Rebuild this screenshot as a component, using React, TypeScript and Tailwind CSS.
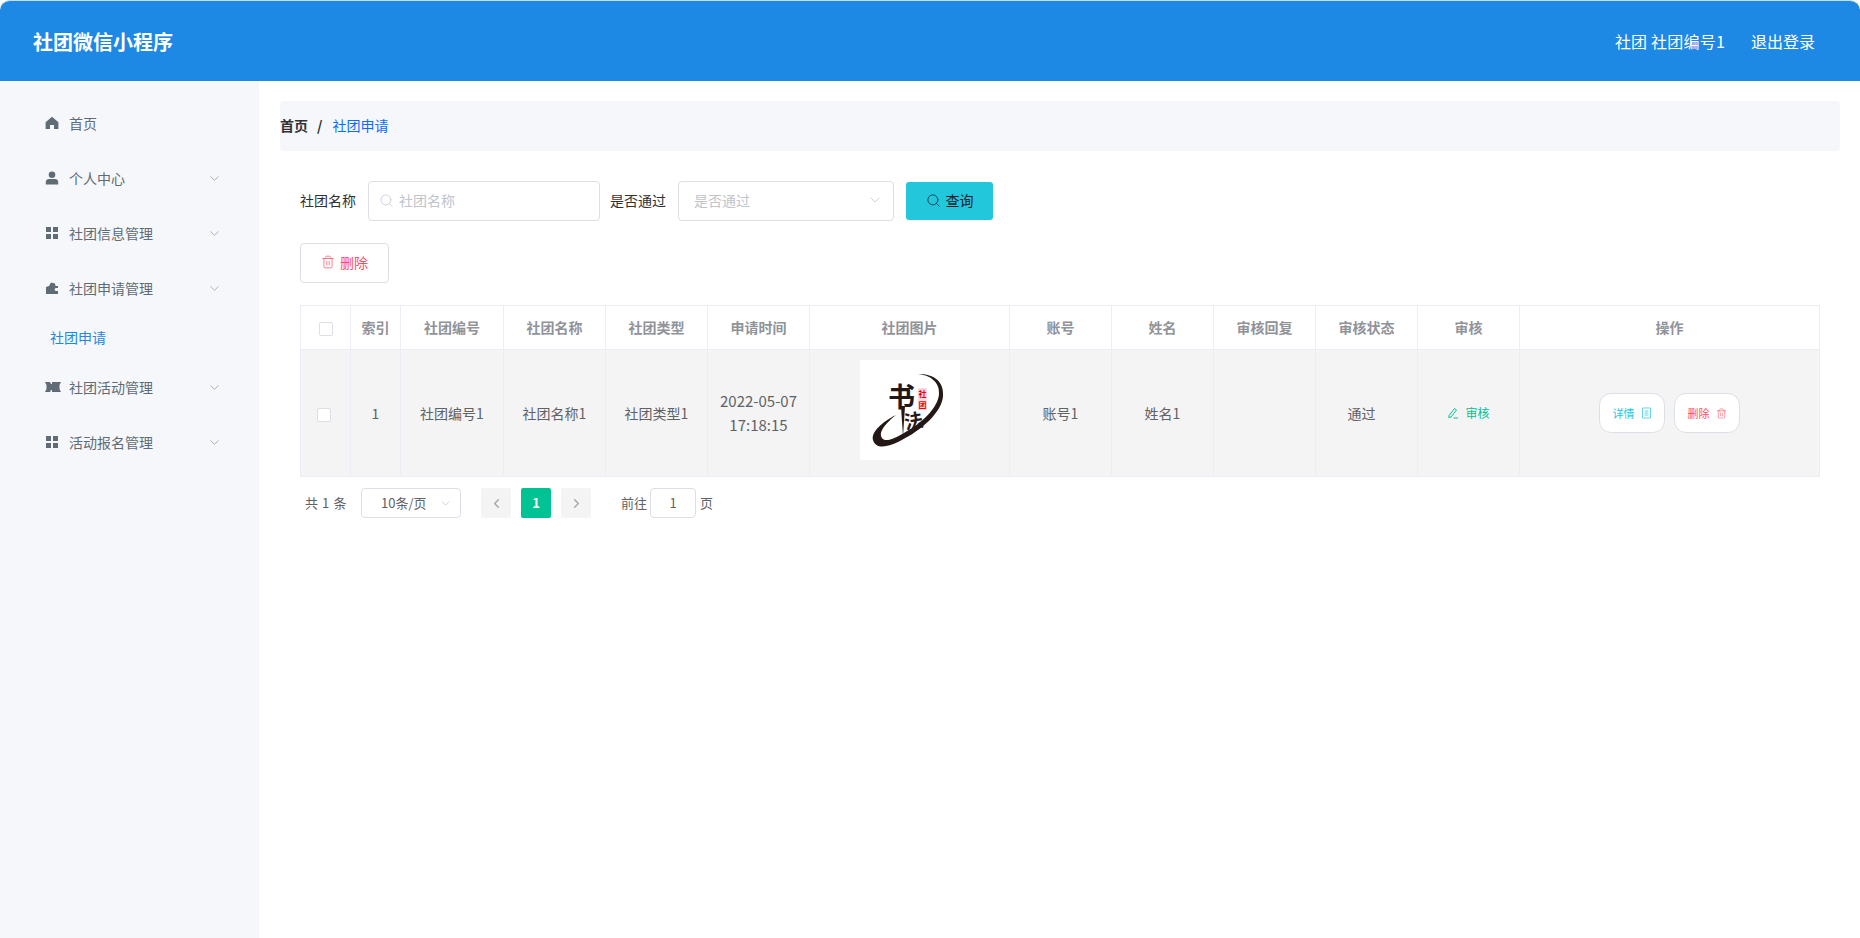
import { ChevronDown, ChevronLeft, ChevronRight, Search, Trash2 } from "lucide-react";
import type { ReactNode } from "react";

const cjk = "font-['Microsoft_YaHei','Noto_Sans_CJK_SC','Noto_Sans',sans-serif]";

function HomeIcon() {
  return (
    <svg width="14" height="14" viewBox="0 0 14 14" fill="#5f6b75">
      <path d="M7 .8 13.4 6.200V13H9V9H5v4H.6V6.200Z" />
    </svg>
  );
}

function UserIcon() {
  return (
    <svg width="14" height="14" viewBox="0 0 14 14" fill="#5f6b75">
      <circle cx="7" cy="3.800" r="3.300" />
      <path d="M.8 13.500V11c0-1.900 1.500-3 3-3h6.400c1.500 0 3 1.100 3 3v2.500Z" />
    </svg>
  );
}

function GridIcon() {
  return (
    <svg width="14" height="14" viewBox="0 0 14 14" fill="#5f6b75">
      <rect x="1" y="1" width="5" height="5" />
      <rect x="8" y="1" width="5" height="5" />
      <rect x="1" y="8" width="5" height="5" />
      <rect x="8" y="8" width="5" height="5" />
    </svg>
  );
}

function CaseIcon() {
  return (
    <svg width="14" height="14" viewBox="0 0 14 14" fill="#5f6b75">
      <path d="M1 6 4 5 6 1.500 10 2.500 10.500 5 13 5V7H10.500L9.500 8.500 10.500 10H13V13H1Z" />
    </svg>
  );
}

function TicketIcon() {
  return (
    <svg width="16" height="14" viewBox="0 0 16 14" fill="#5f6b75">
      <path d="M0 2h5l1 2h1V2h4l1 0h4l-1.500 3v4L16 12h-4l-1 0H7v-2H6l-1 2H0l1.500-3V5Z" />
    </svg>
  );
}

function MenuItem({ icon, label, arrow = true }: { icon: ReactNode; label: string; arrow?: boolean }) {
  return (
    <div className="flex h-[55px] items-center pl-[45px] pr-[37px] text-sm text-[#5f6b75]">
      <span className="flex w-6 shrink-0 items-center">{icon}</span>
      <span className="flex-1">{label}</span>
      {arrow && <ChevronDown size={15} strokeWidth={1.1} className="mt-[2px] text-[#8a939c]" />}
    </div>
  );
}

function Sidebar() {
  return (
    <aside className="w-[259px] shrink-0 bg-[#f5f7fb] pt-[14px]">
      <MenuItem icon={<HomeIcon />} label="首页" arrow={false} />
      <MenuItem icon={<UserIcon />} label="个人中心" />
      <MenuItem icon={<GridIcon />} label="社团信息管理" />
      <MenuItem icon={<CaseIcon />} label="社团申请管理" />
      <div className="flex h-[44px] items-center pl-[50px] text-sm text-[#1e88e5]">社团申请</div>
      <MenuItem icon={<TicketIcon />} label="社团活动管理" />
      <MenuItem icon={<GridIcon />} label="活动报名管理" />
    </aside>
  );
}

function Checkbox({ className = "" }: { className?: string }) {
  return <span className={`inline-block h-[14px] w-[14px] rounded-[2px] border border-[#dcdfe6] bg-white align-middle ${className}`} />;
}

// the society's round logo, the characters stay real text
function Logo() {
  const family = "'Noto Sans CJK SC',sans-serif";
  return (
    <div className="mx-auto mb-[7px] h-[100px] w-[100px] bg-white">
      <svg width="100" height="100" viewBox="0 0 100 100">
        <path
          d="M58 14C75 14 84 22 83 36C82 52 62 70 40 81C28 87 16 90 13 80C11 72 22 62 36 55C26 63 18 72 22 78C25 83 36 78 44 73C62 63 78 48 79 34C80 22 70 15 58 14Z"
          fill="#231815"
        />
        <text x="28" y="47" fontSize="27" fontWeight="700" fill="#231815" fontFamily={family}>
          书
        </text>
        <path d="M41 46 43 77 45 46Z" fill="#231815" />
        <text x="44" y="68" fontSize="19" fontWeight="700" fill="#231815" fontFamily={family} transform="rotate(-10 53 60)">
          法
        </text>
        <rect x="58" y="28" width="9" height="22" fill="#fbdcdc" />
        <text x="58.500" y="37" fontSize="8" fontWeight="700" fill="#e60012" fontFamily={family}>
          社
        </text>
        <text x="58.500" y="48" fontSize="8" fontWeight="700" fill="#e60012" fontFamily={family}>
          团
        </text>
      </svg>
    </div>
  );
}

const headers = ["索引", "社团编号", "社团名称", "社团类型", "申请时间", "社团图片", "账号", "姓名", "审核回复", "审核状态", "审核", "操作"];

function DataTable() {
  const th = "border border-[#ebeef5] pb-[2px] text-sm font-bold text-[#909399]";
  const td = "border border-[#ebeef5] text-sm leading-[24px] text-[#606266]";
  return (
    <table className="w-[1519px] table-fixed border-collapse text-center">
      <colgroup>
        <col className="w-[50px]" />
        <col className="w-[50px]" />
        <col className="w-[103px]" />
        <col className="w-[102px]" />
        <col className="w-[102px]" />
        <col className="w-[102px]" />
        <col className="w-[200px]" />
        <col className="w-[102px]" />
        <col className="w-[102px]" />
        <col className="w-[102px]" />
        <col className="w-[102px]" />
        <col className="w-[102px]" />
        <col className="w-[300px]" />
      </colgroup>
      <thead>
        <tr className="h-[44px] bg-white">
          <th className={th}>
            <Checkbox />
          </th>
          {headers.map((h) => (
            <th key={h} className={th}>
              {h}
            </th>
          ))}
        </tr>
      </thead>
      <tbody>
        <tr className="h-[127px] bg-[#f4f4f5]">
          <td className={td}>
            <Checkbox className="mr-1" />
          </td>
          <td className={td}>1</td>
          <td className={td}>社团编号1</td>
          <td className={td}>社团名称1</td>
          <td className={td}>社团类型1</td>
          <td className={`${td} text-[15px]`}>
            2022-05-07
            <br />
            17:18:15
          </td>
          <td className={td}>
            <Logo />
          </td>
          <td className={td}>账号1</td>
          <td className={td}>姓名1</td>
          <td className={td}></td>
          <td className={`${td} pr-[10px]`}>通过</td>
          <td className={td}>
            <span className="inline-flex items-center gap-[6px] text-xs text-[#00c292]">
              <svg width="12" height="12" viewBox="0 0 12 12" fill="none" stroke="currentColor" strokeWidth="1">
                <path d="M2 8.500 7.500 1.500 9.500 3 4 10l-2.200.5ZM6.500 11H11" />
              </svg>
              审核
            </span>
          </td>
          <td className={td}>
            <div className="flex items-center justify-center gap-[9px]">
              <button className="flex h-10 w-[66px] items-center justify-center gap-[6px] rounded-[12px] border border-[#dcdfe6] bg-white text-[11px] text-[#23c7dc]">
                详情
                <svg width="11" height="12" viewBox="0 0 11 12" fill="none" stroke="currentColor" strokeWidth="1" opacity=".7">
                  <path d="M1.500 1h8v10h-8ZM3.500 4h4M3.500 6h4M3.500 8h4" />
                </svg>
              </button>
              <button className="flex h-10 w-[66px] items-center justify-center gap-[6px] rounded-[12px] border border-[#dcdfe6] bg-white text-[11px] text-[#ff4d5e]">
                删除
                <Trash2 size={11} strokeWidth={1.2} />
              </button>
            </div>
          </td>
        </tr>
      </tbody>
    </table>
  );
}

function Pagination() {
  return (
    <div className="mt-[11px] flex h-[30px] items-center text-[13px] text-[#606266]">
      <span className="ml-[5px] w-[56px] tracking-[0.6px]">共 1 条</span>
      <div className="flex h-[30px] w-[100px] items-center justify-between rounded border border-[#dcdfe6] pl-[19px] pr-2 text-[13px]">
        10条/页
        <ChevronDown size={13} strokeWidth={1.2} className="text-[#b5bac3]" />
      </div>
      <div className="ml-5 flex h-[30px] w-[30px] items-center justify-center rounded-[2px] bg-[#f4f4f5] text-[#a5a9b2]">
        <ChevronLeft size={15} strokeWidth={2.4} />
      </div>
      <div className="ml-[10px] flex h-[30px] w-[30px] items-center justify-center rounded-[2px] bg-[#00c292] font-bold text-white">1</div>
      <div className="ml-[10px] flex h-[30px] w-[30px] items-center justify-center rounded-[2px] bg-[#f4f4f5] text-[#a5a9b2]">
        <ChevronRight size={15} strokeWidth={2.4} />
      </div>
      <span className="ml-[30px]">前往</span>
      <div className="ml-[3px] flex h-[30px] w-[46px] items-center justify-center rounded border border-[#dcdfe6]">1</div>
      <span className="ml-1">页</span>
    </div>
  );
}

export default function App() {
  return (
    <div className={`flex h-[938px] w-[1860px] flex-col overflow-hidden bg-white ${cjk}`}>
      <header className="flex h-[81px] shrink-0 items-center justify-between rounded-t-[10px] border-t border-t-[#c9dcee] bg-[#1e88e5] pl-[33px] pr-[45px] text-white">
        <span className="pt-[2px] text-xl font-bold">社团微信小程序</span>
        <div className="flex gap-[26px] text-base">
          <span className="tracking-[0.2px]">社团 社团编号1</span>
          <span>退出登录</span>
        </div>
      </header>
      <div className="flex flex-1">
        <Sidebar />
        <main className="flex-1 pl-[21px] pr-5 pt-5">
          <div className="flex h-[50px] items-center rounded bg-[#f5f7fb] pb-[2px] text-sm">
            <span className="font-bold text-[#303133]">首页</span>
            <span className="ml-[9px] mr-[10px] font-bold text-[#303133]">/</span>
            <span className="text-[#0a6cff]">社团申请</span>
          </div>
          <div className="pl-5">
            <div className="mt-[30px] flex h-10 items-center text-sm leading-[18px] text-[#303133]">
              <span className="w-[68px] pb-[2px]">社团名称</span>
              <div className="flex h-10 w-[232px] items-center gap-[5px] rounded border border-[#dcdfe6] pb-[2px] pl-[10px] text-[#c0c4cc]">
                <Search size={15} strokeWidth={1.2} />
                社团名称
              </div>
              <span className="ml-[10px] w-[68px] pb-[2px]">是否通过</span>
              <div className="flex h-10 w-[216px] items-center justify-between rounded border border-[#dcdfe6] pb-[2px] pl-[15px] pr-[10px] text-[#c0c4cc]">
                是否通过
                <ChevronDown size={16} strokeWidth={1.2} />
              </div>
              <button className="ml-3 flex h-[38px] w-[87px] items-center justify-center gap-[5px] rounded-[3px] bg-[#23c7dc] pb-[2px] text-[#15202b]">
                <Search size={15} strokeWidth={1.2} />
                查询
              </button>
            </div>
            <button className="mt-[22px] flex h-10 w-[89px] items-center justify-center gap-[5px] rounded border border-[#dcdfe6] bg-white pb-[2px] text-sm text-[#ff4d5e]">
              <Trash2 size={14} strokeWidth={1.2} />
              删除
            </button>
            <div className="mt-[22px]">
              <DataTable />
            </div>
            <Pagination />
          </div>
        </main>
      </div>
    </div>
  );
}
